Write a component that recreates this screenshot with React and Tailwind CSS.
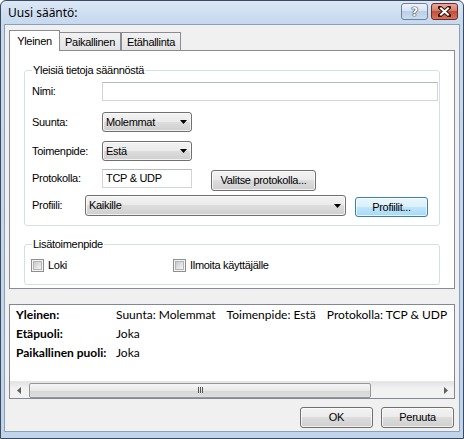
import React from "react";

const sys =
  "font-['Liberation_Sans',Arial,sans-serif] text-[11px] leading-[13px] tracking-[-0.3px] text-black";
const seg = "font-['Noto_Sans','Open_Sans',sans-serif]";

function Button({ children, className = "", focused = false }) {
  return (
    <div
      className={`flex items-center justify-center rounded-[3px] border shadow-[inset_0_0_0_1px_rgba(255,255,255,0.7)] ${
        focused
          ? "border-[#3c7fb1] bg-[linear-gradient(#eaf6fd_0%,#d9f0fc_50%,#bee6fd_50%,#a7d9f5_100%)]"
          : "border-[#707070] bg-[linear-gradient(#f2f2f2_0%,#ebebeb_50%,#dddddd_50%,#cfcfcf_100%)]"
      } ${className}`}
    >
      {children}
    </div>
  );
}

function Combo({ value, className = "" }) {
  return (
    <div
      className={`flex items-center justify-between rounded-[3px] border border-[#707070] bg-[linear-gradient(#f2f2f2_0%,#ebebeb_50%,#dddddd_50%,#cfcfcf_100%)] shadow-[inset_0_0_0_1px_rgba(255,255,255,0.7)] pl-[3px] pr-[4px] ${className}`}
    >
      <span>{value}</span>
      <svg width="7" height="4" viewBox="0 0 7 4">
        <path d="M0 0h7L3.5 4z" fill="#000" />
      </svg>
    </div>
  );
}

function TextBox({ value = "", className = "" }) {
  return (
    <div
      className={`flex items-center border border-[#d0d5db] border-t-[#b5b9c0] bg-white pl-[3px] ${className}`}
    >
      {value}
    </div>
  );
}

function Check({ label, className = "" }) {
  return (
    <div className={`flex items-center ${className}`}>
      <div className="w-[13px] h-[13px] border border-[#8e8f8f] bg-[#f4f4f4] p-[1px]">
        <div className="w-full h-full border border-[#b5b5b5] bg-[linear-gradient(135deg,#c9c9c9,#f5f5f5)]" />
      </div>
      <span className="ml-[4px]">{label}</span>
    </div>
  );
}

export default function App() {
  return (
    <div
      className={`w-[464px] h-[439px] flex flex-col border border-[#3b4a5c] rounded-t-[6px] bg-[linear-gradient(#dbe7f5,#c6d9ef_22px,#c0d4ec)] ${sys}`}
    >
      {/* title bar */}
      <div className="h-[23px] shrink-0 flex items-start pl-[7px] pr-[5px] pt-[2px]">
        <span className={`${seg} text-[12px] leading-[17px] mt-[1px] tracking-normal`}>Uusi sääntö:</span>
        <div className="ml-auto flex gap-[3px]">
          <div className="w-[27px] h-[17px] rounded-[3px] border border-[#6f8196] bg-[linear-gradient(#eef4fb_0%,#d7e4f3_45%,#bccfe6_50%,#c9dcf1_100%)] flex items-center justify-center">
            <span className="font-['DejaVu_Sans',sans-serif] font-bold text-[12px] leading-[12px] text-white [text-shadow:0_0_1px_#1e2b3a,0_0_1px_#1e2b3a,0_0_1px_#1e2b3a]">
              ?
            </span>
          </div>
          <div className="w-[27px] h-[17px] rounded-[3px] border border-[#6b2b22] bg-[linear-gradient(#e8a99c_0%,#d57c6a_45%,#c24f39_50%,#d7735c_100%)] flex items-center justify-center">
            <svg width="13" height="11" viewBox="0 0 13 11">
              <path d="M2 1.5l9 8M11 1.5l-9 8" stroke="#3a1410" strokeWidth="4" strokeLinecap="square" />
              <path d="M2.3 1.8l8.4 7.4M10.7 1.8l-8.4 7.4" stroke="#fff" strokeWidth="2" />
            </svg>
          </div>
        </div>
      </div>

      {/* client */}
      <div className="mx-[3px] mb-[6px] flex-1 border border-[#8b9fb7] bg-[#f0f0f0] flex flex-col px-[4px] pt-[5px]">
        {/* tabs */}
        <div className="flex items-end h-[20px] relative z-10">
          <div className="h-[21px] -mb-px w-[51px] border border-b-0 border-[#898c95] bg-white flex justify-center pt-[4px]">
            Yleinen
          </div>
          <div className="h-[18px] w-[62px] -ml-px border border-b-0 border-[#898c95] bg-[linear-gradient(#f2f2f2,#e3e3e3)] flex justify-center pt-[3px]">
            Paikallinen
          </div>
          <div className="h-[18px] w-[60px] border border-b-0 border-[#898c95] bg-[linear-gradient(#f2f2f2,#e3e3e3)] flex justify-center pt-[3px]">
            Etähallinta
          </div>
        </div>

        {/* tab page */}
        <div className="h-[239px] shrink-0 border border-[#898c95] bg-white px-[14px] pt-[13px]">
          <fieldset className="h-[162px] border border-[#d5dfe5] rounded-[3px] pl-[7px] pr-[1px]">
            <legend className="px-[1px] leading-[13px]">Yleisiä tietoja säännöstä</legend>
            <div className="flex items-center h-[19px] mt-[5px]">
              <div className="w-[70px]">Nimi:</div>
              <TextBox className="flex-1 h-[19px]" />
            </div>
            <div className="flex items-center h-[20px] mt-[11px]">
              <div className="w-[70px]">Suunta:</div>
              <Combo value="Molemmat" className="w-[90px] h-[20px]" />
            </div>
            <div className="flex items-center h-[20px] mt-[9px]">
              <div className="w-[70px]">Toimenpide:</div>
              <Combo value="Estä" className="w-[90px] h-[20px]" />
            </div>
            <div className="flex items-start h-[22px] mt-[8px]">
              <div className="w-[70px] h-[19px] flex items-center">Protokolla:</div>
              <TextBox value="TCP & UDP" className="w-[90px] h-[19px]" />
              <Button className="w-[105px] h-[21px] ml-[19px] mt-px">Valitse protokolla...</Button>
            </div>
            <div className="flex items-start h-[22px] mt-[4px]">
              <div className="w-[53px] h-[21px] flex items-center">Profiili:</div>
              <Combo value="Kaikille" className="w-[261px] h-[21px]" />
              <Button focused className="w-[73px] h-[20px] ml-[9px] mt-[2px]">
                Profiilit...
              </Button>
            </div>
          </fieldset>

          <fieldset className="h-[47px] mt-[12px] border border-[#d5dfe5] rounded-[3px] pl-[6px]">
            <legend className="ml-[1px] px-[1px] leading-[13px]">Lisätoimenpide</legend>
            <div className="flex items-center h-[13px] mt-[8px]">
              <Check label="Loki" className="w-[142px]" />
              <Check label="Ilmoita käyttäjälle" />
            </div>
          </fieldset>
        </div>

        {/* summary */}
        <div className="mt-[15px] h-[95px] shrink-0 border border-[#828790] bg-white flex flex-col font-['Lato','Noto_Sans',sans-serif] text-[12px] tracking-normal">
          <div className="flex-1 overflow-hidden whitespace-nowrap pl-[6px] leading-[19px]">
            <div className="flex">
              <span className="w-[100px] shrink-0 font-bold">Yleinen:</span>
              <span className="shrink-0">Suunta: Molemmat</span>
              <span className="shrink-0 ml-[11px]">Toimenpide: Estä</span>
              <span className="shrink-0 ml-[11px]">Protokolla: TCP &amp; UDP</span>
            </div>
            <div className="flex">
              <span className="w-[100px] shrink-0 font-bold">Etäpuoli:</span>
              <span>Joka</span>
            </div>
            <div className="flex">
              <span className="w-[100px] shrink-0 font-bold">Paikallinen puoli:</span>
              <span>Joka</span>
            </div>
          </div>
          {/* horizontal scrollbar */}
          <div className="h-[17px] shrink-0 flex items-center bg-[linear-gradient(#e3e3e3,#f2f2f2_40%,#f2f2f2)] border-t border-[#e6e6e6]">
            <div className="w-[17px] h-full flex items-center justify-center">
              <svg width="4" height="7" viewBox="0 0 4 7">
                <path d="M4 0v7L0 3.5z" fill="#606060" />
              </svg>
            </div>
            <div className="flex-1 h-full flex items-center">
              <div className="ml-[2px] w-[342px] h-[15px] rounded-[2px] border border-[#979797] bg-[linear-gradient(#f6f6f6,#e8e8e8_50%,#d7d7d7_50%,#dedede)] flex items-center justify-center">
                <div className="flex gap-[1px]">
                  <div className="w-[1px] h-[6px] bg-[#555]" />
                  <div className="w-[1px] h-[6px] bg-[#555]" />
                  <div className="w-[1px] h-[6px] bg-[#555]" />
                </div>
              </div>
            </div>
            <div className="w-[17px] h-full flex items-center justify-center">
              <svg width="4" height="7" viewBox="0 0 4 7">
                <path d="M0 0v7L4 3.5z" fill="#606060" />
              </svg>
            </div>
          </div>
        </div>

        {/* dialog buttons */}
        <div className="mt-[8px] flex justify-end pr-[1px]">
          <Button className="w-[73px] h-[21px]">OK</Button>
          <Button className="w-[73px] h-[21px] ml-[8px]">Peruuta</Button>
        </div>
      </div>
    </div>
  );
}
